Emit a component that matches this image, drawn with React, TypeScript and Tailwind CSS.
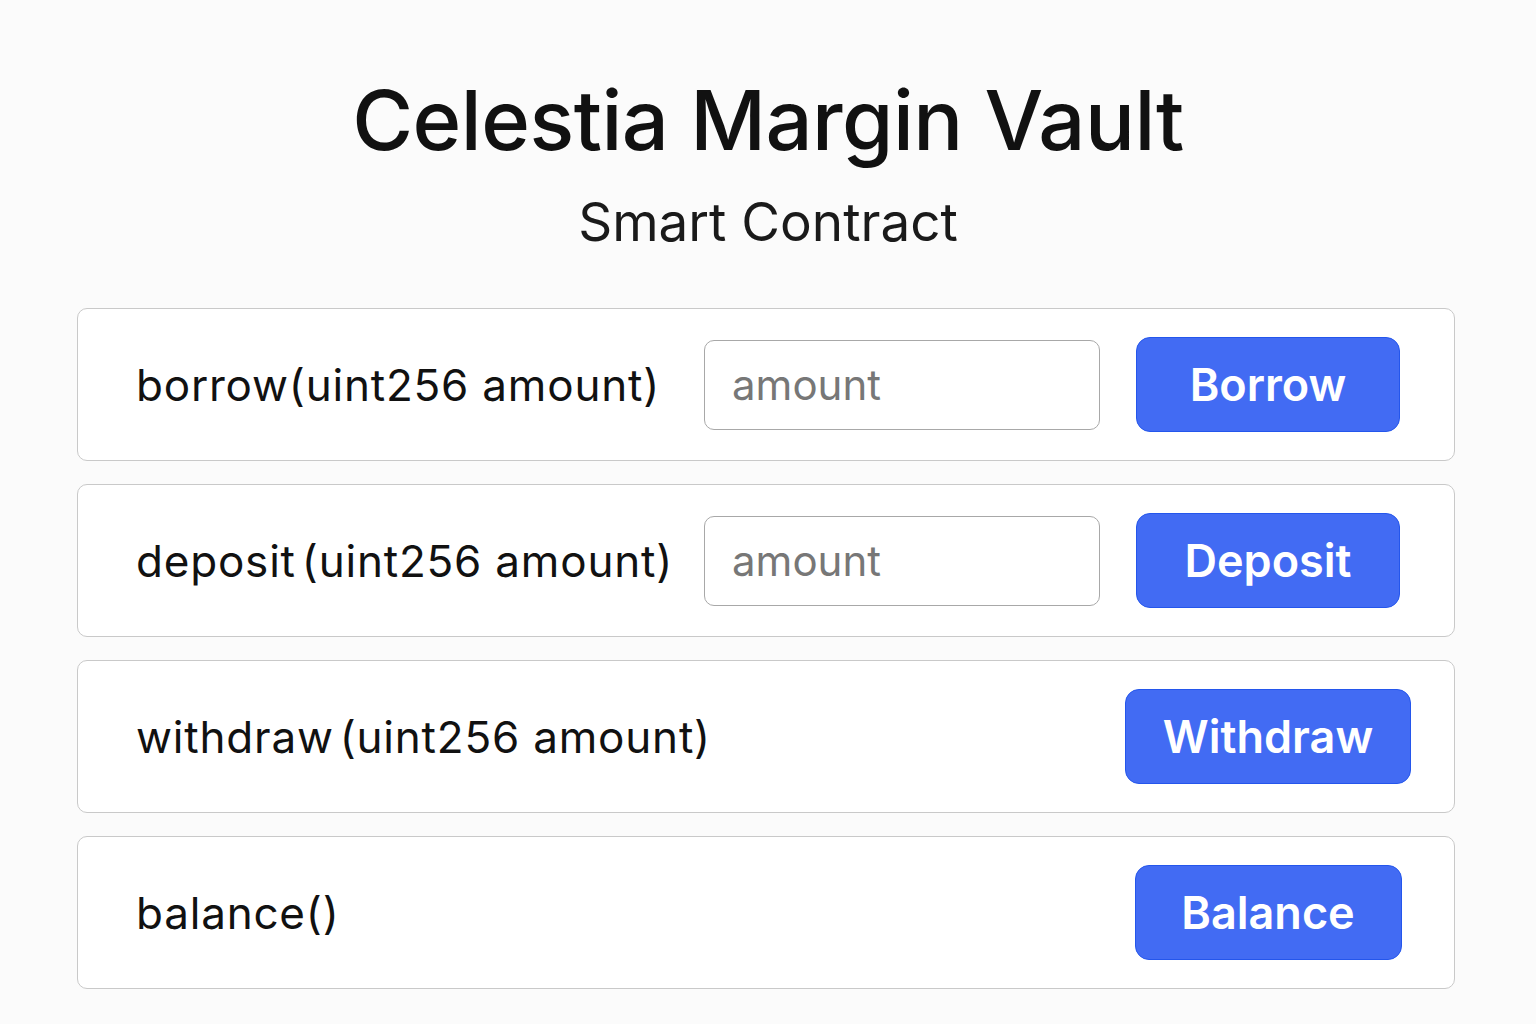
const rows = [
  { label: 'borrow', sig: '(uint256 amount)', gap: '', input: true, button: 'Borrow', btnW: 'w-[264px]' },
  { label: 'deposit', sig: '(uint256 amount)', gap: 'ml-[6px]', input: true, button: 'Deposit', btnW: 'w-[264px]' },
  { label: 'withdraw', sig: '(uint256 amount)', gap: 'ml-[6px]', input: false, button: 'Withdraw', btnW: 'w-[286px]' },
  { label: 'balance', sig: '()', gap: '', input: false, button: 'Balance', btnW: 'w-[267px]' },
];

export default function App() {
  return (
    <div className="min-h-screen w-full bg-[#fbfbfb] font-['Inter',sans-serif] text-[#111]">
      <div className="flex flex-col items-center pt-[72px]">
        <h1 className="text-[83px] font-medium leading-[96px] tracking-[-0.5px]">Celestia Margin Vault</h1>
        <p className="mt-[22px] text-[53px] leading-[64px] text-[#1a1a1a]">Smart Contract</p>
      </div>

      <div className="ml-[77px] mr-[81px] mt-[54px] flex flex-col gap-[23px]">
        {rows.map((r) => (
          <div
            key={r.label}
            className="flex h-[153px] items-center rounded-[10px] border border-[#c9c9c9] bg-white pl-[58px] pr-[36px]"
          >
            <div className="flex-1 text-[44px] tracking-[0.8px]">
              {r.label}
              <span className={r.gap}>{r.sig}</span>
            </div>
            {r.input && (
              <div className="mr-[18px] flex h-[90px] w-[396px] items-center rounded-[10px] border border-[#a8a8a8] bg-white px-[27px] text-[42px] text-[#777]">
                amount
              </div>
            )}
            <div className="flex w-[300px] justify-center">
              <button
                className={`${r.btnW} h-[95px] rounded-[14px] border border-[#2456ec] bg-[#426bf3] text-[45px] font-semibold text-white`}
              >
                {r.button}
              </button>
            </div>
          </div>
        ))}
      </div>
    </div>
  );
}
